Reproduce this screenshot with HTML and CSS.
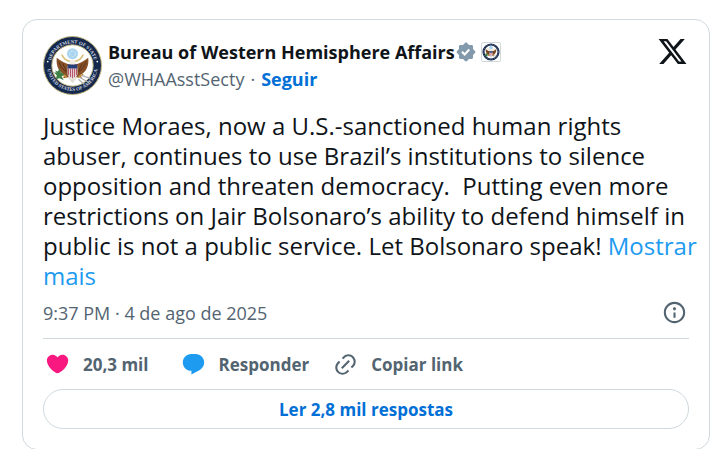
FILE: index.html
```html
<!DOCTYPE html>
<html lang="pt">
<head>
<meta charset="utf-8">
<meta name="viewport" content="width=device-width, initial-scale=1">
<title>Bureau of Western Hemisphere Affairs</title>
<link rel="stylesheet" href="styles.css">
</head>
<body>
<main class="embed">
  <article class="card">
    <header class="header">
      <a class="avatar" href="#" aria-label="Bureau of Western Hemisphere Affairs">
        <svg viewBox="0 0 60 60">
          <defs>
            <path id="arc-top" d="M7.5 30a22.5 22.5 0 0 1 45 0"/>
            <path id="arc-bottom" d="M4.2 30a25.8 25.8 0 0 0 51.6 0"/>
            <symbol id="eagle" viewBox="0 0 40 40">
              <circle cx="20" cy="7" r="5.6" fill="#a9d4f0"/>
              <circle cx="20" cy="7" r="3" fill="none" stroke="#e8f5fc" stroke-dasharray="1 1"/>
              <path d="M9 8q3 6 9 7M31 8q-3 6-9 7" fill="none" stroke="#d9c078" stroke-width="1.6"/>
              <path d="M17 18C13 17 8 14 4 11c-1 8 2 15 9 18l-3 3 6-1 4 4 4-4 6 1-3-3c7-3 10-10 9-18-4 3-9 6-13 7l-1-3h-4z" fill="#875027"/>
              <path d="M6 15q2 7 8 11M34 15q-2 7-8 11M10 17l4 8M30 17l-4 8" fill="none" stroke="#5b321a"/>
              <path d="M17 15q3-4 6 0l-1 5h-4z" fill="#f3eee3"/>
              <path d="M15 31l5 6 5-6z" fill="#e4ddd2"/>
              <path d="M15 19h10v9q-1 4-5 5-4-1-5-5z" fill="#eee"/>
              <path d="M16 22v7M18 22v9M20 22v10M22 22v9M24 22v7" stroke="#b9586c" stroke-width="1.2"/>
              <path d="M15 18h10v4H15z" fill="#263d78"/>
              <path d="M14 31l-5-3M26 31l5-3" stroke="#c99235" stroke-width="1.8"/>
              <path d="M2 24l3 1 2-3 1 4 4 2-3 2 2 4-4-2-4 1 1-4-3-3 3 0z" fill="#3f8044"/>
              <path d="M27 31l9 5M29 29l9 3M26 33l6 5" stroke="#b0b0b0" stroke-width="1.3"/>
            </symbol>
          </defs>
          <circle cx="30" cy="30" r="29.5" fill="#14284c" stroke="#c2b480"/>
          <circle cx="30" cy="30" r="21" fill="#fff" stroke="#c2b480"/>
          <text class="seal-text"><textPath href="#arc-top" startOffset="50%" text-anchor="middle">DEPARTMENT OF STATE</textPath></text>
          <text class="seal-text"><textPath href="#arc-bottom" startOffset="50%" text-anchor="middle">UNITED STATES OF AMERICA</textPath></text>
          <circle cx="4.8" cy="26" r=".9" fill="#fff"/><circle cx="55.2" cy="26" r=".9" fill="#fff"/>
          <use href="#eagle" x="10" y="11" width="40" height="40"/>
        </svg>
      </a>
      <div class="identity">
        <div class="name-row">
          <a class="name" href="#">Bureau of Western Hemisphere Affairs</a>
          <svg class="verified" viewBox="0 0 22 22" aria-hidden="true"><path fill="#829aab" d="M12.05 2.056c-.568-.608-1.532-.608-2.1 0l-1.393 1.49c-.284.303-.685.47-1.1.455L5.42 3.932c-.832-.028-1.514.654-1.486 1.486l.069 2.039c.014.415-.152.816-.456 1.1l-1.49 1.392c-.608.568-.608 1.533 0 2.101l1.49 1.393c.304.284.47.684.456 1.1l-.07 2.038c-.027.832.655 1.514 1.487 1.486l2.038-.069c.415-.014.816.152 1.1.455l1.392 1.49c.569.609 1.533.609 2.102 0l1.393-1.49c.283-.303.684-.47 1.099-.455l2.038.069c.832.028 1.515-.654 1.486-1.486L18 14.542c-.015-.415.152-.815.455-1.099l1.49-1.393c.608-.568.608-1.533 0-2.101l-1.49-1.393c-.303-.283-.47-.684-.455-1.1l.068-2.038c.029-.832-.654-1.514-1.486-1.486l-2.038.07c-.415.013-.816-.153-1.1-.456zm-5.817 9.367l1.429-1.371 1.984 2.066 3.9-4.251 1.474 1.352-5.347 5.828z"/></svg>
          <span class="affiliate"><svg viewBox="0 0 60 60" aria-hidden="true"><circle cx="30" cy="30" r="25" fill="#fff" stroke="#14284c" stroke-width="7"/><circle cx="30" cy="30" r="25" fill="none" stroke="#8793a8" stroke-width="2" stroke-dasharray="4 4"/><use href="#eagle" x="8" y="8" width="44" height="44"/></svg></span>
        </div>
        <div class="handle-row"><a class="handle" href="#">@WHAAsstSecty</a><span>·</span><a class="follow" href="#">Seguir</a></div>
      </div>
      <a class="x-logo" href="#" aria-label="X"><svg viewBox="0 0 24 24"><path fill="#0f1419" d="M18.244 2.25h3.308l-7.227 8.26 8.502 11.24H16.17l-5.214-6.817L4.99 21.75H1.68l7.73-8.835L1.254 2.25H8.08l4.713 6.231zm-1.161 17.52h1.833L7.084 4.126H5.117z"/></svg></a>
    </header>
    <p class="text">Justice Moraes, now a U.S.-sanctioned human rights<br>abuser, continues to use Brazil’s institutions to silence<br>opposition and threaten democracy.&nbsp; Putting even more<br>restrictions on Jair Bolsonaro’s ability to defend himself in<br>public is not a public service. Let Bolsonaro speak! <a class="more" href="#">Mostrar<br>mais</a></p>
    <div class="meta">
      <a class="date" href="#">9:37 PM · 4 de ago de 2025</a>
      <a class="info" href="#" aria-label="Info"><svg class="icon" viewBox="0 0 24 24"><path d="M13.5 8.5c0 .83-.67 1.5-1.5 1.5s-1.5-.67-1.5-1.5S11.17 7 12 7s1.5.67 1.5 1.5zM13 17v-5h-2v5h2zm-1 5.25c5.66 0 10.25-4.59 10.25-10.25S17.66 1.75 12 1.75 1.75 6.34 1.75 12 6.34 22.25 12 22.25zM20.25 12c0 4.56-3.69 8.25-8.25 8.25S3.75 16.56 3.75 12 7.44 3.75 12 3.75s8.25 3.69 8.25 8.25z"/></svg></a>
    </div>
    <div class="actions">
      <a class="action" href="#"><svg class="icon like" viewBox="0 0 24 24" aria-hidden="true"><path transform="translate(-.2 .2) scale(1.02 .93)" d="M12 21.638h-.014C9.403 21.59 1.95 14.856 1.95 8.478c0-3.064 2.525-5.754 5.403-5.754 2.29 0 3.83 1.58 4.646 2.73.814-1.148 2.354-2.73 4.645-2.73 2.88 0 5.404 2.69 5.404 5.755 0 6.376-7.454 13.11-10.037 13.157H12z"/></svg><span>20,3 mil</span></a>
      <a class="action" href="#"><svg class="icon reply" viewBox="0 0 24 24" aria-hidden="true"><path d="M1.751 10c0-4.42 3.584-8 8.005-8h4.366c4.49 0 8.129 3.64 8.129 8.13 0 2.96-1.607 5.68-4.196 7.11l-8.054 4.46v-3.69h-.067c-4.49.1-8.183-3.51-8.183-8.01z"/></svg><span>Responder</span></a>
      <button class="action copy" type="button"><svg class="icon" viewBox="0 0 24 24" aria-hidden="true"><path d="M18.36 5.64c-1.95-1.96-5.11-1.96-7.07 0L9.88 7.05 8.46 5.64l1.42-1.42c2.73-2.73 7.16-2.73 9.9 0 2.73 2.74 2.73 7.17 0 9.9l-1.42 1.42-1.41-1.42 1.41-1.41c1.96-1.96 1.96-5.12 0-7.07zm-2.12 3.53l-7.07 7.07-1.41-1.41 7.07-7.07 1.41 1.41zm-12.02.71l1.42-1.42 1.41 1.42-1.41 1.41c-1.96 1.96-1.96 5.12 0 7.07 1.95 1.96 5.11 1.96 7.07 0l1.41-1.41 1.42 1.41-1.42 1.42c-2.73 2.73-7.16 2.73-9.9 0-2.73-2.74-2.73-7.17 0-9.9z"/></svg><span>Copiar link</span></button>
    </div>
    <a class="replies" href="#">Ler 2,8 mil respostas</a>
  </article>
</main>
</body>
</html>
```

FILE: styles.css
```css
* {
  box-sizing: border-box;
}

body {
  margin: 0;
  background: #fff;
  color: #0f1419;
  font-family: "Open Sans", "Noto Sans", sans-serif;
  font-size: 18px;
}

a {
  color: inherit;
  text-decoration: none;
}

svg {
  display: block;
}

/* The frame trims the lowest pixels of the card. */
.embed {
  margin: 19px 10px 0 22px;
  overflow: hidden;
}

.card {
  margin-bottom: -1px;
  padding: 16px 20px 20px;
  border: 1px solid #cfd9de;
  border-radius: 15px;
}

.header {
  display: flex;
  align-items: flex-start;
}

.avatar {
  flex: none;
  width: 59px;
  margin-right: 6px;
}

.seal-text {
  fill: #d5dbe4;
  font-family: "Liberation Serif", serif;
  font-size: 5px;
  font-weight: 700;
}

.identity {
  flex: 1;
  min-width: 0;
  padding-top: 2px;
}

.name-row,
.handle-row {
  display: flex;
  align-items: center;
  height: 27px;
  white-space: nowrap;
}

.name {
  font-weight: 700;
}

.verified {
  flex: none;
  width: 22px;
  margin-right: 4px;
}

.affiliate {
  flex: none;
  width: 20px;
  border: 1px solid #cfd9de;
  border-radius: 2px;
}

.handle-row {
  gap: 6px;
  color: #536471;
}

.follow {
  color: #006fd6;
  font-weight: 700;
}

.x-logo {
  flex: none;
  width: 31px;
  margin-right: 1px;
}

.text {
  margin: 16px 0 0;
  font-size: 24px;
  line-height: 30px;
  white-space: nowrap;
}

.more {
  color: #1d9bf0;
}

.meta {
  display: flex;
  align-items: center;
  justify-content: space-between;
  height: 48px;
  padding-bottom: 4px;
  border-bottom: 1px solid #cfd9de;
  color: #536471;
}

.icon {
  flex: none;
  width: 25px;
  height: 25px;
  fill: #536471;
}

.info {
  margin-right: 2px;
}

.actions {
  display: flex;
  align-items: center;
  gap: 32px;
  height: 50px;
  padding-left: 2px;
}

.action {
  display: flex;
  align-items: center;
  gap: 13px;
  padding: 0;
  border: 0;
  background: none;
  color: #536471;
  font: inherit;
  font-size: 17px;
  font-weight: 700;
  white-space: nowrap;
}

.copy {
  margin-left: -8px;
}

.like {
  fill: #f91880;
}

.reply {
  fill: #1d9bf0;
}

.replies {
  display: flex;
  align-items: center;
  justify-content: center;
  height: 40px;
  border: 1px solid #cfd9de;
  border-radius: 20px;
  color: #006fd6;
  font-size: 17px;
  font-weight: 700;
}
```
